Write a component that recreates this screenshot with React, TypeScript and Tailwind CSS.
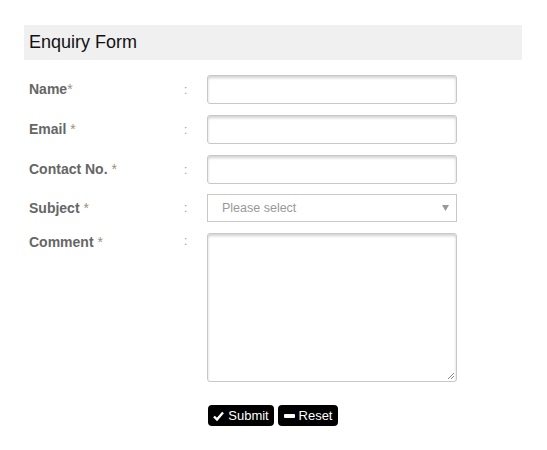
import React from "react";

const inputCls =
  "w-[250px] h-[29px] border border-[#c8c8c8] rounded-[3px] bg-white shadow-[inset_0_2px_3px_rgba(0,0,0,0.18)]";

function Row({ label, children, top = "items-center", labelCls = "", cls = "" }: { label: string; children: React.ReactNode; top?: string; labelCls?: string; cls?: string }) {
  const star = label.endsWith("*");
  const text = label.replace(/\*$/, "");
  return (
    <div className={`flex ${top} ${cls}`}>
      <div className={`w-[155px] text-[14px] font-bold text-[#666] ${labelCls}`}>
        {text}
        {star && <span className="text-[#a08f80] font-normal">*</span>}
      </div>
      <div className={`w-[23px] text-[12px] text-[#999] ${labelCls}`}>:</div>
      {children}
    </div>
  );
}

export default function App() {
  return (
    <div className="w-[547px] h-[450px] bg-white" style={{ fontFamily: '"Liberation Sans", Arial, sans-serif' }}>
      <div className="pt-[25px] pl-[24px] w-[522px]">
        <div className="h-[35px] bg-[#f0f0f0] flex items-center pl-[5px] text-[18px] text-[#111]">Enquiry Form</div>
        <div className="pl-[5px] mt-[15px] flex flex-col gap-[11px]">
          <Row label="Name*">
            <div className={inputCls} />
          </Row>
          <Row label="Email *">
            <div className={inputCls} />
          </Row>
          <Row label="Contact No. *">
            <div className={inputCls} />
          </Row>
          <Row label="Subject *" cls="-mt-[1px]">
            <div className="w-[250px] h-[28px] border border-[#c8c8c8] bg-white flex items-center justify-between pl-[14px] pr-[7px] text-[12.5px] text-[#999]">
              <span>Please select</span>
              <svg width="7" height="6" viewBox="0 0 7 6"><path d="M0 0 H7 L3.5 6 Z" fill="#999" /></svg>
            </div>
          </Row>
          <Row label="Comment *" top="items-start" labelCls="-mt-[1px]">
            <div className={`${inputCls} h-[149px] relative`}>
              <svg className="absolute right-[1px] bottom-[1px]" width="8" height="8" viewBox="0 0 8 8">
                <path d="M7 1 L1 7 M7 4 L4 7" stroke="#888" strokeWidth="1" />
              </svg>
            </div>
          </Row>
        </div>
        <div className="ml-[184px] mt-[23px] flex gap-[4px]">
          <button className="h-[21px] w-[66px] bg-black text-white rounded-[4px] flex items-center justify-center gap-[4px] text-[13px]">
            <svg width="11" height="10" viewBox="0 0 11 10"><path d="M1 5.5 L4 8.5 L10 1.5" stroke="white" strokeWidth="2.4" fill="none" /></svg>
            Submit
          </button>
          <button className="h-[21px] w-[60px] bg-black text-white rounded-[4px] flex items-center justify-center gap-[4px] text-[13px]">
            <span className="inline-block w-[11px] h-[4px] bg-white rounded-[1px]" />
            Reset
          </button>
        </div>
      </div>
    </div>
  );
}
